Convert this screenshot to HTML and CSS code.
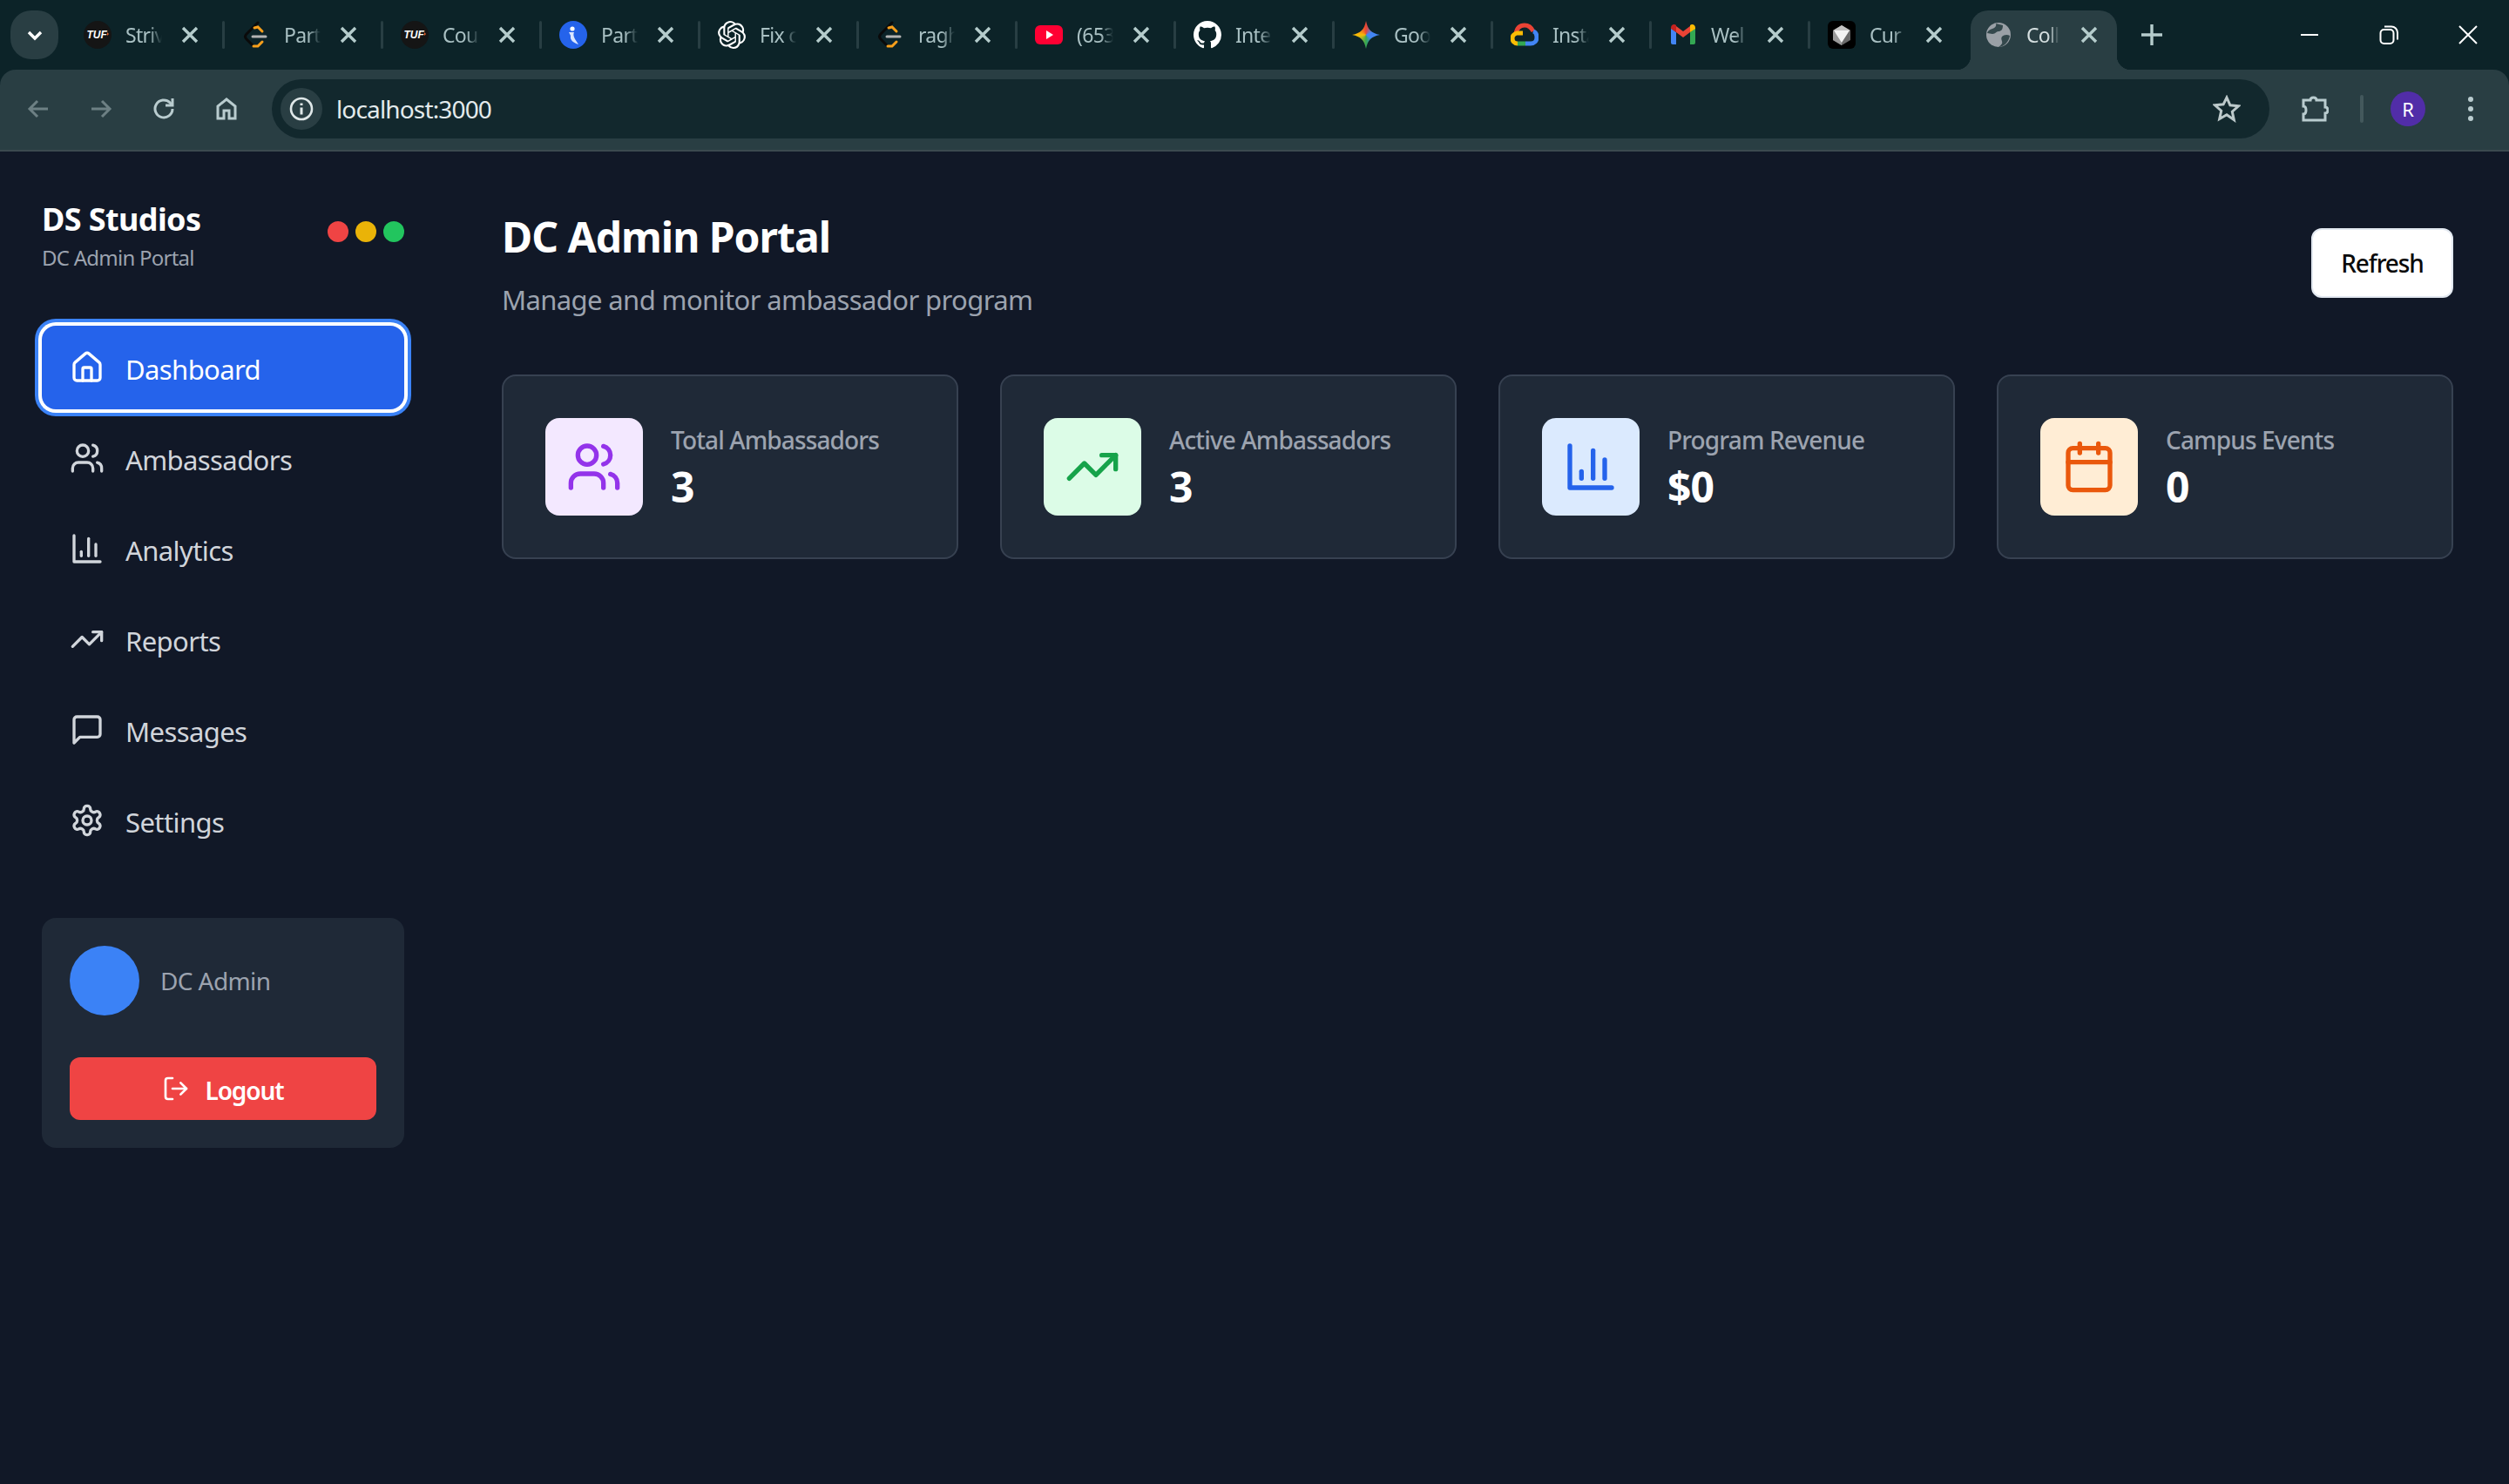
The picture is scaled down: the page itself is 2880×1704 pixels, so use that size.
FILE: index.html
```html
<!DOCTYPE html>
<html lang="en">

<head>
    <meta charset="UTF-8">
    <meta name="viewport" content="width=device-width, initial-scale=1.0">
    <title>DC Admin Portal</title>
    <link rel="stylesheet" href="styles.css">
</head>

<body>
    <svg class="sprite" aria-hidden="true">
        <symbol id="i-home" viewBox="0 0 24 24"><path d="M3 10a2 2 0 0 1 .709-1.528l7-5.999a2 2 0 0 1 2.582 0l7 5.999A2 2 0 0 1 21 10v9a2 2 0 0 1-2 2H5a2 2 0 0 1-2-2z"/><path d="M15 21v-8a1 1 0 0 0-1-1h-4a1 1 0 0 0-1 1v8"/></symbol>
        <symbol id="i-users" viewBox="0 0 24 24"><path d="M16 21v-2a4 4 0 0 0-4-4H6a4 4 0 0 0-4 4v2"/><circle cx="9" cy="7" r="4"/><path d="M22 21v-2a4 4 0 0 0-3-3.87"/><path d="M16 3.13a4 4 0 0 1 0 7.75"/></symbol>
        <symbol id="i-chart" viewBox="0 0 24 24"><path d="M3 3v18h18"/><path d="M18 17V9"/><path d="M13 17V5"/><path d="M8 17v-3"/></symbol>
        <symbol id="i-trend" viewBox="0 0 24 24"><polyline points="22 7 13.5 15.5 8.5 10.5 2 17"/><polyline points="16 7 22 7 22 13"/></symbol>
        <symbol id="i-message" viewBox="0 0 24 24"><path d="M21 15a2 2 0 0 1-2 2H7l-4 4V5a2 2 0 0 1 2-2h14a2 2 0 0 1 2 2z"/></symbol>
        <symbol id="i-gear" viewBox="0 0 24 24"><path d="M12.22 2h-.44a2 2 0 0 0-2 2v.18a2 2 0 0 1-1 1.73l-.43.25a2 2 0 0 1-2 0l-.15-.08a2 2 0 0 0-2.73.73l-.22.38a2 2 0 0 0 .73 2.73l.15.1a2 2 0 0 1 1 1.72v.51a2 2 0 0 1-1 1.74l-.15.09a2 2 0 0 0-.73 2.73l.22.38a2 2 0 0 0 2.73.73l.15-.08a2 2 0 0 1 2 0l.43.25a2 2 0 0 1 1 1.73V20a2 2 0 0 0 2 2h.44a2 2 0 0 0 2-2v-.18a2 2 0 0 1 1-1.73l.43-.25a2 2 0 0 1 2 0l.15.08a2 2 0 0 0 2.73-.73l.22-.39a2 2 0 0 0-.73-2.73l-.15-.08a2 2 0 0 1-1-1.74v-.5a2 2 0 0 1 1-1.74l.15-.09a2 2 0 0 0 .73-2.73l-.22-.38a2 2 0 0 0-2.73-.73l-.15.08a2 2 0 0 1-2 0l-.43-.25a2 2 0 0 1-1-1.73V4a2 2 0 0 0-2-2z"/><circle cx="12" cy="12" r="3"/></symbol>
        <symbol id="i-logout" viewBox="0 0 24 24"><path d="M9 21H5a2 2 0 0 1-2-2V5a2 2 0 0 1 2-2h4"/><polyline points="16 17 21 12 16 7"/><line x1="21" y1="12" x2="9" y2="12"/></symbol>
        <symbol id="i-calendar" viewBox="0 0 24 24"><path d="M8 2v4"/><path d="M16 2v4"/><rect x="3" y="4" width="18" height="18" rx="2"/><path d="M3 10h18"/></symbol>
        <symbol id="i-close" viewBox="0 0 28 28"><path d="M6 6l16 16M22 6L6 22"/></symbol>
        <symbol id="fav-tuf" viewBox="0 0 32 32"><circle cx="16" cy="16" r="16" fill="#151515"/><text x="3.5" y="19.5" class="tuf-text">TUF</text><path d="M27 13l2 2-2 2z" fill="#e8622c"/></symbol>
        <symbol id="fav-lc" viewBox="0 0 32 32"><path d="M18 2L5 15c-2 2-2 4 0 6l7 7" fill="none" stroke="#0a0a0a" stroke-width="3" stroke-linecap="round"/><path d="M14 8l4-1 5 5M13 29l5 0 5-5" fill="none" stroke="#f89f1b" stroke-width="3" stroke-linecap="round"/><path d="M12 18h15" stroke="#b3b3b3" stroke-width="3" stroke-linecap="round"/></symbol>
    </svg>

    <div class="chrome">
        <header class="tabstrip">
            <button class="tab-search"><svg width="24" height="24" viewBox="0 0 24 24"><path d="M5 9l7 7 7-7" fill="none" stroke="#fff" stroke-width="3.4"/></svg></button>

            <div class="tab">
                <svg class="favicon"><use href="#fav-tuf"/></svg>
                <span class="tab-title">Striv</span>
                <svg class="tab-close"><use href="#i-close"/></svg>
            </div>
            <div class="tab">
                <svg class="favicon"><use href="#fav-lc"/></svg>
                <span class="tab-title">Part</span>
                <svg class="tab-close"><use href="#i-close"/></svg>
            </div>
            <div class="tab">
                <svg class="favicon"><use href="#fav-tuf"/></svg>
                <span class="tab-title">Cou</span>
                <svg class="tab-close"><use href="#i-close"/></svg>
            </div>
            <div class="tab">
                <svg class="favicon" viewBox="0 0 32 32"><circle cx="16" cy="16" r="16" fill="#2563eb"/><circle cx="15" cy="9" r="2.6" fill="#fff"/><path d="M11 13l6 0c-2 4 1 8 5 14-6-2-10-5-9-10z" fill="#dbe6ff"/></svg>
                <span class="tab-title">Part</span>
                <svg class="tab-close"><use href="#i-close"/></svg>
            </div>
            <div class="tab">
                <svg class="favicon" viewBox="0 0 24 24"><path fill="#fff" d="M22.2819 9.8211a5.9847 5.9847 0 0 0-.5157-4.9108 6.0462 6.0462 0 0 0-6.5098-2.9A6.0651 6.0651 0 0 0 4.9807 4.1818a5.9847 5.9847 0 0 0-3.9977 2.9 6.0462 6.0462 0 0 0 .7427 7.0966 5.98 5.98 0 0 0 .511 4.9107 6.051 6.051 0 0 0 6.5146 2.9001A5.9847 5.9847 0 0 0 13.2599 24a6.0557 6.0557 0 0 0 5.7718-4.2058 5.9894 5.9894 0 0 0 3.9977-2.9001 6.0557 6.0557 0 0 0-.7475-7.0729zm-9.022 12.6081a4.4755 4.4755 0 0 1-2.8764-1.0408l.1419-.0804 4.7783-2.7582a.7948.7948 0 0 0 .3927-.6813v-6.7369l2.02 1.1686a.071.071 0 0 1 .038.052v5.5826a4.504 4.504 0 0 1-4.4945 4.4944zm-9.6607-4.1254a4.4708 4.4708 0 0 1-.5346-3.0137l.142.0852 4.783 2.7582a.7712.7712 0 0 0 .7806 0l5.8428-3.3685v2.3324a.0804.0804 0 0 1-.0332.0615L9.74 19.9502a4.4992 4.4992 0 0 1-6.1408-1.6464zM2.3408 7.8956a4.485 4.485 0 0 1 2.3655-1.9728V11.6a.7664.7664 0 0 0 .3879.6765l5.8144 3.3543-2.0201 1.1685a.0757.0757 0 0 1-.071 0l-4.8303-2.7865A4.504 4.504 0 0 1 2.3408 7.872zm16.5963 3.8558L13.1038 8.364 15.1192 7.2a.0757.0757 0 0 1 .071 0l4.8303 2.7913a4.4944 4.4944 0 0 1-.6765 8.1042v-5.6772a.79.79 0 0 0-.407-.667zm2.0107-3.0231l-.142-.0852-4.7735-2.7818a.7759.7759 0 0 0-.7854 0L9.409 9.2297V6.8974a.0662.0662 0 0 1 .0284-.0615l4.8303-2.7866a4.4992 4.4992 0 0 1 6.6802 4.66zM8.3065 12.863l-2.02-1.1638a.0804.0804 0 0 1-.038-.0567V6.0742a4.4992 4.4992 0 0 1 7.3757-3.4537l-.142.0805L8.704 5.459a.7948.7948 0 0 0-.3927.6813zm1.0976-2.3654l2.602-1.4998 2.6069 1.4998v2.9994l-2.5974 1.4997-2.6067-1.4997Z"/></svg>
                <span class="tab-title">Fix c</span>
                <svg class="tab-close"><use href="#i-close"/></svg>
            </div>
            <div class="tab">
                <svg class="favicon"><use href="#fav-lc"/></svg>
                <span class="tab-title">ragh</span>
                <svg class="tab-close"><use href="#i-close"/></svg>
            </div>
            <div class="tab">
                <svg class="favicon" viewBox="0 0 32 32"><rect x="0" y="5" width="32" height="22" rx="6" fill="#ff0033"/><path d="M13 11l8 5-8 5z" fill="#fff"/></svg>
                <span class="tab-title">(653</span>
                <svg class="tab-close"><use href="#i-close"/></svg>
            </div>
            <div class="tab">
                <svg class="favicon" viewBox="0 0 16 16"><path fill="#fff" d="M8 0C3.58 0 0 3.58 0 8c0 3.54 2.29 6.53 5.47 7.59.4.07.55-.17.55-.38 0-.19-.01-.82-.01-1.49-2.01.37-2.53-.49-2.69-.94-.09-.23-.48-.94-.82-1.13-.28-.15-.68-.52-.01-.53.63-.01 1.08.58 1.23.82.72 1.21 1.87.87 2.33.66.07-.52.28-.87.51-1.07-1.78-.2-3.64-.89-3.64-3.95 0-.87.31-1.59.82-2.15-.08-.2-.36-1.02.08-2.12 0 0 .67-.21 2.2.82.64-.18 1.32-.27 2-.27.68 0 1.36.09 2 .27 1.53-1.04 2.2-.82 2.2-.82.44 1.1.16 1.92.08 2.12.51.56.82 1.27.82 2.15 0 3.07-1.87 3.75-3.65 3.95.29.25.54.73.54 1.48 0 1.07-.01 1.93-.01 2.2 0 .21.15.46.55.38A8.013 8.013 0 0016 8c0-4.42-3.58-8-8-8z"/></svg>
                <span class="tab-title">Inte</span>
                <svg class="tab-close"><use href="#i-close"/></svg>
            </div>
            <div class="tab">
                <span class="favicon gemini"></span>
                <span class="tab-title">Goo</span>
                <svg class="tab-close"><use href="#i-close"/></svg>
            </div>
            <div class="tab">
                <svg class="favicon" viewBox="0 0 32 32"><g fill="none" stroke-width="5"><path d="M6 15C7 8 11 5 16 5c4 0 8 3 10 7" stroke="#ea4335"/><path d="M26 12c3 1 4 4 4 7 0 4-3 7-7 7h-6" stroke="#4285f4"/><path d="M17 26H8" stroke="#34a853"/><path d="M8 26c-4 0-6-3-6-6 0-3 2-5 5-6h7" stroke="#fbbc04"/></g></svg>
                <span class="tab-title">Insta</span>
                <svg class="tab-close"><use href="#i-close"/></svg>
            </div>
            <div class="tab">
                <svg class="favicon" viewBox="0 0 32 32"><path d="M2 8v17a2 2 0 0 0 2 2h4V13z" fill="#4285f4"/><path d="M30 8v17a2 2 0 0 1-2 2h-4V13z" fill="#34a853"/><path d="M8 13l8 6 8-6V6l-8 6-8-6z" fill="#ea4335"/><path d="M2 8c0-4 4-5 6-3v8L2 9z" fill="#c5221f"/><path d="M30 8c0-4-4-5-6-3v8l6-4z" fill="#fbbc04"/></svg>
                <span class="tab-title">Wel</span>
                <svg class="tab-close"><use href="#i-close"/></svg>
            </div>
            <div class="tab no-divider">
                <svg class="favicon" viewBox="0 0 32 32"><rect width="32" height="32" rx="6" fill="#000"/><path d="M16 5l10 6v11l-10 6-10-6V11z" fill="#6b6b6b"/><path d="M16 19v9l-10-6V11z" fill="#9a9a9a"/><path d="M16 5l10 6H6z" fill="#c4c4c4"/><path d="M7 11h18l-9 14z" fill="#f2f2f2"/></svg>
                <span class="tab-title">Cur</span>
                <svg class="tab-close"><use href="#i-close"/></svg>
            </div>

            <div class="tab-active">
                <svg class="globe" viewBox="0 0 28 28"><circle cx="14" cy="14" r="14" fill="#9aa0a6"/><path d="M11 1c1 3-1 5-4 6-3 1-5 2-6 5 2 0 4 1 6 1 4 0 4-3 7-3 3 0 5-2 5-7zM27 15c-3-2-7-1-9 1-2 3 1 5 0 8-1 2-3 3-4 4 6 0 12-6 13-13z" fill="#293e43" opacity=".9"/></svg>
                <span class="tab-title">Coll</span>
                <svg class="tab-close"><use href="#i-close"/></svg>
            </div>
            <svg class="new-tab" viewBox="0 0 28 28"><path d="M14 2v24M2 14h24"/></svg>

            <div class="window-controls">
                <div class="window-btn"><svg width="24" height="24" viewBox="0 0 24 24"><path d="M2 12h20"/></svg></div>
                <div class="window-btn"><svg width="24" height="24" viewBox="0 0 24 24"><rect x="2.5" y="6" width="15" height="16" rx="4"/><path d="M7 2.5h8a7 7 0 0 1 7 7v8"/></svg></div>
                <div class="window-btn"><svg width="24" height="24" viewBox="0 0 24 24"><path d="M2 2l20 20M22 2L2 22"/></svg></div>
            </div>
        </header>

        <div class="toolbar">
            <button class="tool-btn dim"><svg viewBox="0 0 32 32"><path d="M27 16H6M15 7l-9 9 9 9"/></svg></button>
            <button class="tool-btn dim"><svg viewBox="0 0 32 32"><path d="M5 16h21M17 7l9 9-9 9"/></svg></button>
            <button class="tool-btn"><svg viewBox="0 0 32 32"><path d="M26 16a10 10 0 1 1-3-7.2L26 12"/><path d="M26 4v8h-8" /></svg></button>
            <button class="tool-btn"><svg viewBox="0 0 32 32"><path d="M6 27V13L16 5l10 8v14h-7v-9h-6v9z"/></svg></button>
            <div class="omnibox">
                <span class="site-chip"><svg width="28" height="28" viewBox="0 0 28 28"><circle cx="14" cy="14" r="12" fill="none" stroke="#dfe7e8" stroke-width="2.6"/><path d="M14 12.5v8M14 7.5v2.6" stroke="#dfe7e8" stroke-width="3"/></svg></span>
                <span class="url">localhost:3000</span>
                <svg class="star" viewBox="0 0 32 32"><path d="M16 3l3.9 8.800 9.600 1-7.200 6.400 2 9.400L16 22.800l-8.300 4.800 2-9.400-7.200-6.400 9.600-1z"/></svg>
            </div>
            <button class="tool-btn ext"><svg viewBox="0 0 32 32"><path d="M3 6h8c0-4 7-4 7 0h10v8c4 0 4 7 0 7v8H3v-7c4 0 4-9 0-9z"/></svg></button>
            <span class="tool-divider"></span>
            <button class="tool-btn"><span class="profile">R</span></button>
            <button class="tool-btn"><span class="kebab"><i></i><i></i><i></i></span></button>
        </div>
    </div>

    <div class="app">
        <aside class="sidebar">
            <div class="brand">
                <div>
                    <div class="brand-name">DS Studios</div>
                    <div class="brand-sub">DC Admin Portal</div>
                </div>
                <div class="dots">
                    <span class="dot red"></span>
                    <span class="dot yellow"></span>
                    <span class="dot green"></span>
                </div>
            </div>

            <nav class="nav">
                <a class="nav-item active"><svg class="nav-icon"><use href="#i-home"/></svg><span class="nav-label">Dashboard</span></a>
                <a class="nav-item"><svg class="nav-icon"><use href="#i-users"/></svg><span class="nav-label">Ambassadors</span></a>
                <a class="nav-item"><svg class="nav-icon"><use href="#i-chart"/></svg><span class="nav-label">Analytics</span></a>
                <a class="nav-item"><svg class="nav-icon"><use href="#i-trend"/></svg><span class="nav-label">Reports</span></a>
                <a class="nav-item"><svg class="nav-icon"><use href="#i-message"/></svg><span class="nav-label">Messages</span></a>
                <a class="nav-item"><svg class="nav-icon"><use href="#i-gear"/></svg><span class="nav-label">Settings</span></a>
            </nav>

            <div class="user-card">
                <div class="user-row">
                    <span class="avatar"></span>
                    <span class="user-name">DC Admin</span>
                </div>
                <button class="logout"><svg class="logout-icon"><use href="#i-logout"/></svg><span class="nav-label">Logout</span></button>
            </div>
        </aside>

        <main class="main">
            <div class="page-head">
                <div>
                    <h1>DC Admin Portal</h1>
                    <p class="subtitle">Manage and monitor ambassador program</p>
                </div>
                <button class="refresh">Refresh</button>
            </div>

            <section class="stats">
                <div class="stat-card">
                    <div class="stat-icon purple"><svg><use href="#i-users"/></svg></div>
                    <div>
                        <div class="stat-label">Total Ambassadors</div>
                        <div class="stat-value">3</div>
                    </div>
                </div>
                <div class="stat-card">
                    <div class="stat-icon mint"><svg><use href="#i-trend"/></svg></div>
                    <div>
                        <div class="stat-label">Active Ambassadors</div>
                        <div class="stat-value">3</div>
                    </div>
                </div>
                <div class="stat-card">
                    <div class="stat-icon blue"><svg><use href="#i-chart"/></svg></div>
                    <div>
                        <div class="stat-label">Program Revenue</div>
                        <div class="stat-value">$0</div>
                    </div>
                </div>
                <div class="stat-card">
                    <div class="stat-icon orange"><svg><use href="#i-calendar"/></svg></div>
                    <div>
                        <div class="stat-label">Campus Events</div>
                        <div class="stat-value">0</div>
                    </div>
                </div>
            </section>
        </main>
    </div>
</body>

</html>
```

FILE: styles.css
```css
* {
    box-sizing: border-box;
}

body {
    margin: 0;
    height: 100vh;
    display: flex;
    flex-direction: column;
    background-color: #111827;
    font-family: "Noto Sans", "Open Sans", sans-serif;
    overflow: hidden;
}

button {
    font-family: inherit;
    border: none;
    background: none;
    padding: 0;
    cursor: pointer;
}

.sprite {
    display: none;
}

/* browser chrome */
.chrome {
    flex-shrink: 0;
    background-color: #0c2328;
}

.tabstrip {
    height: 80px;
    display: flex;
    align-items: flex-end;
    padding-left: 12px;
}

.tab-search {
    width: 55px;
    height: 56px;
    margin: 0 7px 12px 0;
    border-radius: 24px;
    background-color: #293e43;
    display: flex;
    align-items: center;
    justify-content: center;
}

.tab {
    position: relative;
    width: 182px;
    height: 56px;
    margin-bottom: 12px;
    padding-left: 22px;
    display: flex;
    align-items: center;
}

.tab::after {
    content: "";
    position: absolute;
    right: -2px;
    top: 12px;
    width: 3px;
    height: 32px;
    border-radius: 2px;
    background-color: #283e43;
}

.tab.no-divider::after {
    display: none;
}

.favicon {
    width: 32px;
    height: 32px;
    flex-shrink: 0;
}

.tuf-text {
    font-family: "Liberation Sans", sans-serif;
    font-size: 12px;
    font-weight: 700;
    font-style: italic;
    fill: #fff;
}

.gemini {
    display: block;
    background: conic-gradient(#ea4335 0deg, #4285f4 70deg, #4285f4 120deg, #34a853 180deg, #fbbc04 270deg, #ea4335 360deg);
    clip-path: path("M16 0C18 10 22 14 32 16C22 18 18 22 16 32C14 22 10 18 0 16C10 14 14 10 16 0Z");
}

.tab-title {
    width: 42px;
    margin-left: 16px;
    white-space: nowrap;
    font-size: 23px;
    letter-spacing: -0.7px;
    color: #a9c0c3;
    -webkit-mask-image: linear-gradient(to right, #000 65%, transparent);
    mask-image: linear-gradient(to right, #000 65%, transparent);
}

.tab-close {
    width: 28px;
    height: 28px;
    margin-left: 18px;
    flex-shrink: 0;
    fill: none;
    stroke: #b5cccc;
    stroke-width: 3.4;
}

.tab-active {
    position: relative;
    width: 168px;
    height: 68px;
    margin-left: 4px;
    padding: 0 0 12px 18px;
    display: flex;
    align-items: center;
    background-color: #293e43;
    border-radius: 20px 20px 0 0;
}

.tab-active::before,
.tab-active::after {
    content: "";
    position: absolute;
    bottom: 0;
    width: 16px;
    height: 16px;
}

.tab-active::before {
    left: -16px;
    background: radial-gradient(circle at 0 0, transparent 16px, #293e43 16.5px);
}

.tab-active::after {
    right: -16px;
    background: radial-gradient(circle at 100% 0, transparent 16px, #293e43 16.5px);
}

.globe {
    width: 28px;
    height: 28px;
    flex-shrink: 0;
}

.tab-active .tab-title {
    width: 38px;
    margin-left: 18px;
    color: #d5dfe0;
}

.tab-active .tab-close {
    margin-left: 20px;
}

.new-tab {
    width: 28px;
    height: 28px;
    margin: 0 0 26px 26px;
    fill: none;
    stroke: #b5cccc;
    stroke-width: 3.4;
}

.window-controls {
    margin-left: auto;
    padding-right: 2px;
    display: flex;
    align-self: stretch;
}

.window-btn {
    width: 91px;
    display: flex;
    align-items: center;
    justify-content: center;
}

.window-btn svg {
    fill: none;
    stroke: #fff;
    stroke-width: 2;
}

.toolbar {
    height: 94px;
    display: flex;
    align-items: center;
    padding: 12px 8px 14px;
    background-color: #293e43;
    border-bottom: 2px solid #3c4a4f;
    border-radius: 18px 18px 0 0;
}

.tool-btn {
    width: 72px;
    height: 68px;
    flex-shrink: 0;
    display: flex;
    align-items: center;
    justify-content: center;
}

.tool-btn svg {
    width: 32px;
    height: 32px;
    fill: none;
    stroke: #b9cccf;
    stroke-width: 3;
}

.tool-btn.dim svg {
    stroke: #6d8084;
}

.omnibox {
    flex: 1;
    height: 68px;
    margin: 0 16px;
    padding: 0 33px 0 10px;
    display: flex;
    align-items: center;
    border-radius: 34px;
    background-color: #12282d;
}

.site-chip {
    width: 48px;
    height: 48px;
    border-radius: 50%;
    display: flex;
    align-items: center;
    justify-content: center;
    background-color: #293e43;
}

.url {
    margin-left: 16px;
    font-size: 28px;
    letter-spacing: -0.85px;
    color: #e3ebec;
}

.star {
    width: 32px;
    height: 32px;
    margin-left: auto;
    fill: none;
    stroke: #bcc9ca;
    stroke-width: 3;
}

.tool-divider {
    width: 4px;
    height: 32px;
    margin-right: 15px;
    border-radius: 2px;
    background-color: #43585c;
}

.tool-btn.ext {
    margin-right: 16px;
}

.profile {
    width: 40px;
    height: 40px;
    border-radius: 50%;
    display: flex;
    align-items: center;
    justify-content: center;
    background-color: #512da8;
    color: #fff;
    font-size: 22px;
}

.kebab {
    display: flex;
    flex-direction: column;
    gap: 5px;
}

.kebab i {
    width: 6px;
    height: 6px;
    border-radius: 50%;
    background-color: #b9cccf;
}

/* app */
.app {
    flex: 1;
    display: flex;
    min-height: 0;
}

.sidebar {
    width: 512px;
    flex-shrink: 0;
    padding: 50px 48px 0;
}

.brand {
    height: 88px;
    margin-bottom: 62px;
    display: flex;
    align-items: center;
    justify-content: space-between;
}

.brand-name {
    font-size: 36px;
    line-height: 56px;
    font-weight: 700;
    letter-spacing: -0.6px;
    color: #fff;
}

.brand-sub {
    font-size: 24px;
    line-height: 32px;
    letter-spacing: -0.75px;
    color: #9ca3af;
}

.dots {
    margin-bottom: 4px;
    display: flex;
    gap: 8px;
}

.dot {
    width: 24px;
    height: 24px;
    border-radius: 50%;
}

.red {
    background-color: #ef4444;
}

.yellow {
    background-color: #eab308;
}

.green {
    background-color: #22c55e;
}

.nav {
    display: flex;
    flex-direction: column;
    gap: 8px;
}

.nav-item {
    height: 96px;
    padding: 0 32px;
    display: flex;
    align-items: center;
    gap: 24px;
    border-radius: 16px;
    font-size: 31px;
    letter-spacing: -0.6px;
    color: #d1d5db;
}

.nav-label {
    padding-top: 3px;
}

.nav-item.active {
    background-color: #2563eb;
    color: #fff;
    box-shadow: 0 0 0 4px #fff, 0 0 0 8px #3b82f6;
}

.nav-icon {
    width: 40px;
    height: 40px;
    flex-shrink: 0;
    fill: none;
    stroke: currentColor;
    stroke-width: 2;
    stroke-linecap: round;
    stroke-linejoin: round;
}

.user-card {
    margin-top: 64px;
    padding: 32px;
    border-radius: 16px;
    background-color: #1f2937;
}

.user-row {
    margin-bottom: 48px;
    display: flex;
    align-items: center;
    gap: 24px;
}

.avatar {
    width: 80px;
    height: 80px;
    border-radius: 50%;
    background-color: #3b82f6;
}

.user-name {
    font-size: 28px;
    letter-spacing: -0.6px;
    color: #9ca3af;
}

.logout {
    width: 100%;
    height: 72px;
    display: flex;
    align-items: center;
    justify-content: center;
    gap: 17px;
    border-radius: 12px;
    background-color: #ef4444;
    color: #fff;
    font-size: 28px;
    font-weight: 600;
    letter-spacing: -1.1px;
}

.logout-icon {
    width: 32px;
    height: 32px;
    fill: none;
    stroke: currentColor;
    stroke-width: 2;
    stroke-linecap: round;
    stroke-linejoin: round;
}

.main {
    flex: 1;
    padding: 62px 64px 64px;
}

.page-head {
    margin-bottom: 62px;
    display: flex;
    align-items: center;
    justify-content: space-between;
}

h1 {
    margin: 0 0 12px;
    font-size: 48px;
    line-height: 72px;
    font-weight: 700;
    letter-spacing: -1px;
    color: #fff;
}

.subtitle {
    margin: 0;
    font-size: 31px;
    line-height: 48px;
    letter-spacing: -0.62px;
    color: #9ca3af;
}

.refresh {
    width: 163px;
    height: 80px;
    border: 2px solid #e2e8f0;
    border-radius: 12px;
    background-color: #fff;
    color: #0a0a0a;
    font-size: 28px;
    font-weight: 500;
    letter-spacing: -1.1px;
}

.stats {
    display: grid;
    grid-template-columns: repeat(4, 1fr);
    gap: 48px;
}

.stat-card {
    padding: 48px;
    display: flex;
    align-items: center;
    gap: 32px;
    border: 2px solid #374151;
    border-radius: 16px;
    background-color: #1f2937;
}

.stat-icon {
    width: 112px;
    height: 112px;
    flex-shrink: 0;
    display: flex;
    align-items: center;
    justify-content: center;
    border-radius: 16px;
}

.stat-icon svg {
    width: 64px;
    height: 64px;
    fill: none;
    stroke: currentColor;
    stroke-width: 2;
    stroke-linecap: round;
    stroke-linejoin: round;
}

.purple {
    background-color: #f3e8ff;
    color: #9333ea;
}

.mint {
    background-color: #dcfce7;
    color: #16a34a;
}

.blue {
    background-color: #dbeafe;
    color: #2563eb;
}

.orange {
    background-color: #ffedd5;
    color: #ea580c;
}

.stat-label {
    font-size: 28px;
    line-height: 40px;
    font-weight: 500;
    letter-spacing: -0.87px;
    color: #9ca3af;
}

.stat-value {
    margin-top: 6px;
    font-size: 48px;
    line-height: 56px;
    font-weight: 700;
    letter-spacing: -1px;
    color: #fff;
}
```
